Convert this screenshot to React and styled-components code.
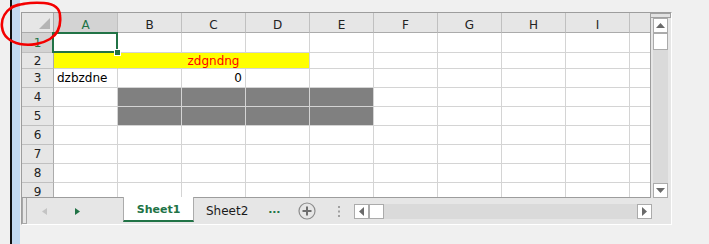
import React from 'react';
import styled, { createGlobalStyle } from 'styled-components';

const GREEN = '#217346';

const GlobalStyle = createGlobalStyle`
  html, body {
    margin: 0;
    padding: 0;
  }
  body {
    background: #f0f0f0;
    font-family: "DejaVu Sans", sans-serif;
  }
`;

const COLS = ['A', 'B', 'C', 'D', 'E', 'F', 'G', 'H', 'I', ''];
const ROWS = [1, 2, 3, 4, 5, 6, 7, 8, 9];

const cells = {
  A1: { selected: true },
  A2: { fill: '#ffff00', joinRight: true },
  B2: { fill: '#ffff00', span: 3, text: 'zdgndng', color: '#ff0000', align: 'center' },
  A3: { text: 'dzbzdne' },
  C3: { text: '0', align: 'flex-end' },
  B4: { fill: '#808080' }, C4: { fill: '#808080' }, D4: { fill: '#808080' }, E4: { fill: '#808080' },
  B5: { fill: '#808080' }, C5: { fill: '#808080' }, D5: { fill: '#808080' }, E5: { fill: '#808080' },
};
const covered = ['C2', 'D2'];

const Page = styled.div`
  position: relative;
  display: flex;
  height: 244px;
  padding-left: 10px;
  overflow: hidden;
`;

const Bezel = styled.div`
  width: 2px;
  background: #111;
`;

const Glow = styled.div`
  width: 8px;
  margin-right: 1px;
  background: #c3d9ef;
`;

const Workbook = styled.div`
  align-self: flex-start;
  margin-top: 12px;
  width: 649px;
  display: flex;
  flex-direction: column;
  background: #e6e6e6;
  border-top: 1px solid #9d9d9d;
  border-left: 1px solid #9d9d9d;
  border-right: 1px solid #fff;
  border-bottom: 1px solid #fff;
`;

const TopArea = styled.div`
  display: flex;
  height: 185px;
`;

const Sheet = styled.div`
  width: 629px;
  height: 185px;
  box-sizing: border-box;
  border-right: 1px solid #9d9d9d;
  border-bottom: 1px solid #9d9d9d;
  overflow: hidden;
  display: grid;
  grid-template-columns: 32px repeat(9, 64px) 21px;
  grid-template-rows: 20px 20px 16px repeat(7, 19px);
  background: #fff;
`;

const Corner = styled.div`
  position: relative;
  background: #e6e6e6;
  border-right: 1px solid #ababab;
  border-bottom: 1px solid #ababab;
  svg {
    position: absolute;
    right: 3px;
    bottom: 3px;
  }
`;

const ColHead = styled.div`
  display: flex;
  align-items: center;
  justify-content: center;
  padding-top: 4px;
  box-sizing: border-box;
  font-size: 12px;
  line-height: 14px;
  background: ${p => (p.$active ? '#d3d3d3' : '#e6e6e6')};
  color: ${p => (p.$active ? GREEN : '#222')};
  border-right: 1px solid #c0c0c0;
  border-bottom: 1px solid #ababab;
`;

const RowHead = styled.div`
  display: flex;
  align-items: center;
  justify-content: center;
  font-size: 12px;
  line-height: 14px;
  background: ${p => (p.$active ? '#d3d3d3' : '#e6e6e6')};
  color: ${p => (p.$active ? GREEN : '#222')};
  border-right: 1px solid #ababab;
  border-bottom: 1px solid #c0c0c0;
`;

const Cell = styled.div`
  position: relative;
  display: flex;
  align-items: center;
  justify-content: ${p => p.$align || 'flex-start'};
  grid-column: span ${p => p.$span || 1};
  padding: 0 3px;
  box-sizing: border-box;
  font-size: 12px;
  line-height: 14px;
  white-space: nowrap;
  color: ${p => p.$color || '#000'};
  background: ${p => p.$fill || '#fff'};
  border-right: 1px solid ${p => (p.$joinRight ? p.$fill : '#d4d4d4')};
  border-bottom: 1px solid #d4d4d4;
`;

const Selection = styled.div`
  position: absolute;
  top: -1px;
  left: -2px;
  right: -1px;
  bottom: -1px;
  border: 2px solid ${GREEN};
  z-index: 2;
  &::after {
    content: '';
    position: absolute;
    right: -4px;
    bottom: -4px;
    width: 5px;
    height: 5px;
    background: ${GREEN};
    box-shadow: 0 0 0 1px #fff;
  }
`;

const VScroll = styled.div`
  width: 20px;
  display: flex;
  flex-direction: column;
  padding-left: 2px;
  box-sizing: border-box;
`;

const SplitBox = styled.div`
  margin-left: -3px;
  width: 21px;
  height: 5px;
  box-sizing: border-box;
  border: 1px solid #a0a0a0;
  background: #e2e2e2;
`;

const ScrollButton = styled.div`
  flex: none;
  width: 15px;
  height: ${p => p.$h || 15}px;
  box-sizing: border-box;
  border: 1px solid #ababab;
  background: #fff;
  display: flex;
  align-items: center;
  justify-content: center;
`;

const Track = styled.div`
  flex: ${p => (p.$grow ? 1 : 'none')};
  width: ${p => (p.$horizontal ? 'auto' : '15px')};
  background: #dadada;
`;

const TabBar = styled.div`
  height: 26px;
  display: flex;
  align-items: center;
  font-size: 12px;
  line-height: 14px;
`;

const Handle = styled.div`
  align-self: stretch;
  width: 5px;
  box-sizing: border-box;
  border-left: 1px solid #a8a8a8;
  border-right: 1px solid #a8a8a8;
  border-bottom: 1px solid #a8a8a8;
`;

const Nav = styled.div`
  width: 96px;
  display: flex;
  align-items: center;
  gap: 28px;
  padding-left: 15px;
  box-sizing: border-box;
`;

const Tab = styled.div`
  align-self: flex-start;
  height: ${p => (p.$active ? '25px' : '26px')};
  margin-top: ${p => (p.$active ? '-1px' : '0')};
  width: ${p => (p.$active ? '71px' : 'auto')};
  padding: ${p => (p.$active ? '2px 0 0' : '0 12px')};
  box-sizing: border-box;
  display: flex;
  align-items: center;
  justify-content: center;
  font-size: ${p => (p.$active ? '11px' : '12px')};
  font-weight: ${p => (p.$active ? 700 : 400)};
  color: ${p => (p.$active ? GREEN : '#1a1a1a')};
  background: ${p => (p.$active ? '#fff' : 'transparent')};
  border-left: ${p => (p.$active ? '1px solid #ababab' : 'none')};
  border-right: ${p => (p.$active ? '1px solid #ababab' : 'none')};
  border-bottom: ${p => (p.$active ? `2px solid ${GREEN}` : 'none')};
`;

const More = styled.div`
  margin-left: 8px;
  margin-top: -2px;
  font-size: 11px;
  font-weight: 700;
  color: ${GREEN};
  letter-spacing: -0.2px;
`;

const AddSheet = styled.div`
  margin-left: 18px;
  display: flex;
`;

const Grip = styled.div`
  margin-left: 22px;
  display: flex;
`;

const HScroll = styled.div`
  margin-left: 14px;
  width: 298px;
  height: 15px;
  display: flex;
`;

const Annotation = styled.svg`
  position: absolute;
  left: 0;
  top: 0;
  pointer-events: none;
  z-index: 5;
`;

function Arrow({ dir, color = '#6a6a6a', w = 5, h = 7 }) {
  const pts = {
    left: `${w},0 0,${h / 2} ${w},${h}`,
    right: `0,0 ${w},${h / 2} 0,${h}`,
    up: `0,${h} ${w / 2},0 ${w},${h}`,
    down: `0,0 ${w / 2},${h} ${w},0`,
  }[dir];
  return (
    <svg width={w} height={h} viewBox={`0 0 ${w} ${h}`}>
      <polygon points={pts} fill={color} />
    </svg>
  );
}

export default function App() {
  return (
    <>
      <GlobalStyle />
      <Page>
        <Bezel />
        <Glow />
        <Workbook>
          <TopArea>
            <Sheet>
              <Corner>
                <svg width="11" height="11" viewBox="0 0 11 11">
                  <polygon points="11,0 11,11 0,11" fill="#b4b4b4" />
                </svg>
              </Corner>
              {COLS.map(c => (
                <ColHead key={c || 'x'} $active={c === 'A'}>{c}</ColHead>
              ))}
              {ROWS.map(r => (
                <React.Fragment key={r}>
                  <RowHead $active={r === 1}>{r}</RowHead>
                  {COLS.map((c, i) => {
                    const id = `${c}${r}`;
                    if (covered.includes(id)) return null;
                    const d = cells[id] || {};
                    return (
                      <Cell
                        key={c || `x${i}`}
                        $fill={d.fill}
                        $span={d.span}
                        $color={d.color}
                        $align={d.align}
                        $joinRight={d.joinRight}
                      >
                        {d.text}
                        {d.selected && <Selection />}
                      </Cell>
                    );
                  })}
                </React.Fragment>
              ))}
            </Sheet>
            <VScroll>
              <SplitBox />
              <ScrollButton><Arrow dir="up" w={9} h={5} /></ScrollButton>
              <ScrollButton $h={17} />
              <Track $grow />
              <ScrollButton><Arrow dir="down" w={9} h={5} /></ScrollButton>
            </VScroll>
          </TopArea>
          <TabBar>
            <Handle />
            <Nav>
              <Arrow dir="left" color="#c4c4c4" />
              <Arrow dir="right" color={GREEN} />
            </Nav>
            <Tab $active>Sheet1</Tab>
            <Tab>Sheet2</Tab>
            <More>...</More>
            <AddSheet>
              <svg width="18" height="18" viewBox="0 0 18 18">
                <circle cx="9" cy="9" r="8" fill="none" stroke="#8c8c8c" strokeWidth="1.2" />
                <path d="M4.5 9h9M9 4.5v9" stroke="#6e6e6e" strokeWidth="2" />
              </svg>
            </AddSheet>
            <Grip>
              <svg width="2" height="11" viewBox="0 0 2 11">
                <rect x="0" y="0" width="2" height="2" fill="#a0a0a0" />
                <rect x="0" y="4.5" width="2" height="2" fill="#a0a0a0" />
                <rect x="0" y="9" width="2" height="2" fill="#a0a0a0" />
              </svg>
            </Grip>
            <HScroll>
              <ScrollButton><Arrow dir="left" w={5} h={9} /></ScrollButton>
              <ScrollButton />
              <Track $grow $horizontal />
              <ScrollButton><Arrow dir="right" w={5} h={9} /></ScrollButton>
            </HScroll>
          </TabBar>
        </Workbook>
        <Annotation width="70" height="50" viewBox="0 0 70 50">
          <path
            d="M10 9 C16 4, 30 2, 44 3 C54 4, 60 8, 60 16 C61 25, 58 34, 50 39 C42 44, 30 46, 20 44 C10 42, 3 36, 2 27 C1 19, 5 12, 12 7 C16 5, 20 4, 24 4"
            fill="none"
            stroke="#f40000"
            strokeWidth="2.6"
            strokeLinecap="round"
          />
        </Annotation>
      </Page>
    </>
  );
}
